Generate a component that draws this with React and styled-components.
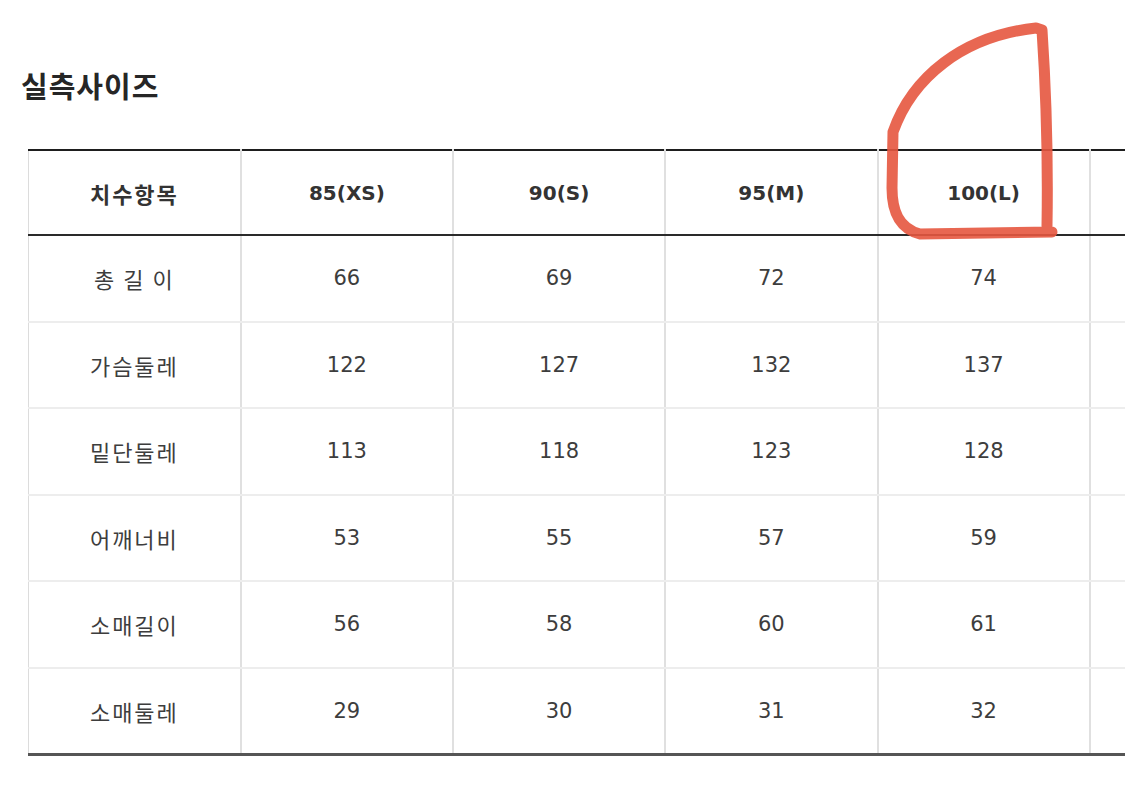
import React from "react";
import styled, { createGlobalStyle } from "styled-components";

const GlobalStyle = createGlobalStyle`
  html, body {
    margin: 0;
    padding: 0;
    background: #fff;
  }
  body {
    font-family: "DejaVu Sans", "Noto Sans CJK KR", sans-serif;
  }
`;

const Page = styled.div`
  position: relative;
  width: 1125px;
  height: 800px;
  overflow: hidden;
  padding: 67px 0 0 21px;
  box-sizing: border-box;
`;

const Title = styled.h2`
  margin: 0;
  font-family: "Noto Sans CJK KR", sans-serif;
  font-size: 29px;
  line-height: 36px;
  font-weight: 700;
  color: #262626;
  letter-spacing: 1px;
`;

const Table = styled.table`
  margin: 46px 0 0 7px;
  border-collapse: collapse;
  table-layout: fixed;
  width: 1275px;
  border-left: 1px solid #dcdcdc;
`;

const Head = styled.th`
  height: 83px;
  padding: 0;
  border-top: 2px solid #1e1e1e;
  border-bottom: 2px solid #2a2a2a;
  border-right: 2px solid #e0e0e0;
  font-family: ${(p) =>
    p.label ? '"Noto Sans CJK KR", sans-serif' : '"DejaVu Sans", sans-serif'};
  font-size: ${(p) => (p.label ? "22px" : "20px")};
  letter-spacing: ${(p) => (p.label ? "2px" : "0")};
  font-weight: 700;
  color: #333;
  text-align: center;
  vertical-align: middle;
`;

const Cell = styled.td`
  height: 84.5px;
  padding: 0;
  border-right: 2px solid #e0e0e0;
  border-bottom: ${(p) => (p.last ? "3px solid #555" : "2px solid #ededed")};
  font-family: ${(p) =>
    p.label ? '"Noto Sans CJK KR", sans-serif' : '"DejaVu Sans", sans-serif'};
  font-size: ${(p) => (p.label ? "22px" : "21px")};
  letter-spacing: ${(p) => (p.label ? "2px" : "0")};
  font-weight: 400;
  color: #3d3d3d;
  text-align: center;
  vertical-align: middle;
`;

const Mark = styled.svg`
  position: absolute;
  left: 0;
  top: 0;
  pointer-events: none;
`;

const sizes = ["85(XS)", "90(S)", "95(M)", "100(L)", ""];

const rows = [
  ["총 길 이", 66, 69, 72, 74],
  ["가슴둘레", 122, 127, 132, 137],
  ["밑단둘레", 113, 118, 123, 128],
  ["어깨너비", 53, 55, 57, 59],
  ["소매길이", 56, 58, 60, 61],
  ["소매둘레", 29, 30, 31, 32],
];

const App = () => {
  return (
    <Page>
      <GlobalStyle />
      <Title>실측사이즈</Title>
      <Table>
        <thead>
          <tr>
            <Head label>치수항목</Head>
            {sizes.map((s, i) => (
              <Head key={i}>{s}</Head>
            ))}
          </tr>
        </thead>
        <tbody>
          {rows.map((row, i) => (
            <tr key={row[0]}>
              {row.map((v, j) => (
                <Cell key={j} label={j === 0} last={i === rows.length - 1}>
                  {v}
                </Cell>
              ))}
              <Cell last={i === rows.length - 1} />
            </tr>
          ))}
        </tbody>
      </Table>
      <Mark width="1125" height="800" viewBox="0 0 1125 800">
        <path
          d="M1052 232 L920 234 C898 228 892 210 892 188 L893 132 C912 78 962 36 1036 28 L1042 30 C1046 90 1048 165 1047 226"
          fill="none"
          stroke="#e6573f"
          strokeOpacity="0.9"
          strokeWidth="11"
          strokeLinecap="round"
          strokeLinejoin="round"
        />
      </Mark>
    </Page>
  );
};

export default App;
